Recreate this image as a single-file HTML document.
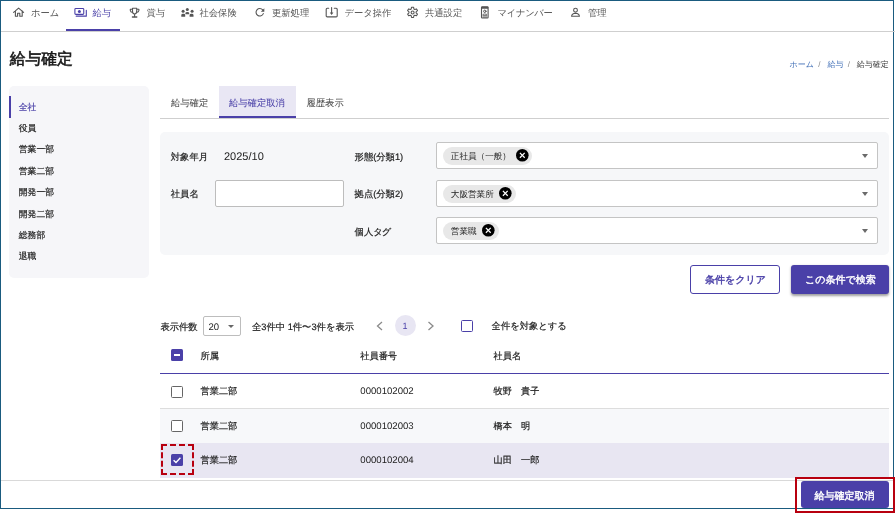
<!DOCTYPE html>
<html lang="ja"><head><meta charset="utf-8">
<style>
*{box-sizing:border-box;margin:0;padding:0}
html,body{width:895px;height:515px;overflow:hidden;background:#fff}
body{font-family:"Liberation Sans",sans-serif;color:#333;text-rendering:geometricPrecision;position:relative}
.a{position:absolute}
.t{position:absolute;white-space:nowrap;line-height:1;-webkit-text-stroke-width:0.2px}
.frame{position:absolute;left:0;top:0;width:894px;height:509px;border:1px solid #1a5b7f}
.nav{font-size:9.3px;color:#555}
.nav .t{-webkit-text-stroke-width:0}
.nav svg{position:absolute;overflow:visible}
.side{font-size:8.8px;color:#222}
.tab{font-size:9.3px;color:#4a4a4a}
.tab .t{-webkit-text-stroke-width:0.05px}
.lbl{font-size:9.3px;color:#222}
.sel{position:absolute;left:436px;width:442px;height:27px;background:#fff;border:1px solid #c4c4c4;border-radius:2px}
.chip{position:absolute;left:6.2px;top:4.2px;height:17.7px;border-radius:9px;background:#e8e8e8}
.chip span{position:absolute;left:7.6px;top:4.6px;font-size:8.6px;line-height:1;white-space:nowrap;color:#222}
.chip svg{position:absolute;top:1.6px;overflow:visible;shape-rendering:geometricPrecision}
.arr{position:absolute;left:424.8px;top:11.1px;width:0;height:0;border-left:3.6px solid transparent;border-right:3.6px solid transparent;border-top:4px solid #6a6a6a}
.cb{position:absolute;width:12px;height:12px;border:1.5px solid #666;border-radius:1.5px;background:#fff}
.row{position:absolute;left:160px;width:729px;height:35px;border-bottom:1px solid #ddd}
.cell{font-size:9.2px;color:#222}
.bc{font-size:8px;color:#333}
.bc .t{-webkit-text-stroke-width:0}
</style></head><body>
<div id="pg" style="position:absolute;left:0;top:0;width:895px;height:515px;will-change:transform">
<div class="frame"></div>

<!-- top nav -->
<div class="a" style="left:1px;top:31px;width:894px;height:1px;background:#cfcfcf"></div>
<div class="a" style="left:66px;top:29.2px;width:54px;height:2px;background:#4a40a8"></div>

<svg class="a" style="left:0;top:0;overflow:visible" width="895" height="32" viewBox="0 0 895 32">
 <g fill="none" stroke="#555" stroke-width="1.1" stroke-linejoin="round" stroke-linecap="round">
  <path d="M13.6 12.4 L18.6 8.1 L23.6 12.4 M15.4 10.9 V16.2 H17.6 V13.2 H19.8 V16.2 H22.2 V10.9"/>
  <path d="M132.5 8.3 H136.7 V11.2 Q136.7 13.8 134.6 14 Q132.5 13.8 132.5 11.2 Z M132.5 9.3 H130.3 V10.5 Q130.5 12.3 132.6 12.5 M136.7 9.3 H138.9 V10.5 Q138.7 12.3 136.6 12.5 M134.6 14 V16.6"/>
  <path d="M132.4 17 H136.8" stroke-width="1.3"/>
  <path d="M262.7 9.9 A3.75 3.75 0 1 0 263.3 13.6"/>
  <path d="M328.7 8.2 H327.2 Q326.2 8.2 326.2 9.2 V16 Q326.2 16.9 327.2 16.9 H336.2 Q337.2 16.9 337.2 16 V9.2 Q337.2 8.2 336.2 8.2 H334.3 M331.6 7.5 V13.2"/>
  <path d="M413.90 9.01 L413.55 7.20 L411.55 7.20 L411.20 9.01 L410.33 9.51 L408.59 8.91 L407.59 10.64 L408.99 11.85 L408.99 12.85 L407.59 14.06 L408.59 15.79 L410.33 15.19 L411.20 15.69 L411.55 17.50 L413.55 17.50 L413.90 15.69 L414.77 15.19 L416.51 15.79 L417.51 14.06 L416.11 12.85 L416.11 11.85 L417.51 10.64 L416.51 8.91 L414.77 9.51 Z"/>
  <circle cx="412.6" cy="12.5" r="1.5"/>
  <rect x="481.5" y="6.8" width="6.6" height="11.2" rx="0.7"/>
  <circle cx="484.8" cy="11.3" r="1.2" stroke-width="1"/>
  <path d="M483 14.3 Q484.8 13.6 486.6 14.3 M482.9 15.7 H486.7 M482.9 17.1 H486.7" stroke-width="0.9"/>
  <circle cx="575.5" cy="10.2" r="1.9"/>
  <path d="M571.6 16.2 Q571.8 13.3 575.5 13.2 Q579.2 13.3 579.4 16.2 Z"/>
 </g>
 <g fill="#555">
  <path d="M264.3 8.3 V11.8 H260.8 Z"/>
  <path d="M329.8 12.6 L331.6 15 L333.4 12.6 Z"/>
  <rect x="481.5" y="6.8" width="6.6" height="2" rx="0.5"/>
  <circle cx="187.3" cy="9.6" r="1.5"/><circle cx="183.1" cy="11.3" r="1.5"/><circle cx="192.1" cy="11.3" r="1.5"/>
  <path d="M185.4 14.3 V13.1 Q185.5 11.9 187.3 11.9 Q189.1 11.9 189.2 13.1 V14.3 Z"/>
  <path d="M181.3 16.8 V14.9 Q181.4 13.7 183 13.7 H183.6 Q185.1 13.8 185.2 14.9 V16.8 Z M189.6 16.8 V14.9 Q189.7 13.8 191.2 13.7 H191.8 Q193.4 13.7 193.5 14.9 V16.8 Z"/>
 </g>
 <g fill="none" stroke="#4a40a8" stroke-linecap="round" stroke-linejoin="round">
  <rect x="74.9" y="8.45" width="8.85" height="5.9" rx="0.9" stroke-width="1.1"/>
  <path d="M76.2 16.15 H86.3 V10.3" stroke-width="1.1"/>
 </g>
 <circle cx="79.4" cy="11.4" r="1.5" fill="#4a40a8"/>
</svg>
<div class="nav">
 <div class="t" style="left:31px;top:9.3px">ホーム</div>
 <div class="t" style="left:92.5px;top:9.3px;color:#4a40a8">給与</div>
 <div class="t" style="left:146.5px;top:9.3px">賞与</div>
 <div class="t" style="left:199.5px;top:9.3px">社会保険</div>
 <div class="t" style="left:272px;top:9.3px">更新処理</div>
 <div class="t" style="left:344.5px;top:9.3px">データ操作</div>
 <div class="t" style="left:425px;top:9.3px">共通設定</div>
 <div class="t" style="left:497.5px;top:9.3px;letter-spacing:-0.3px">マイナンバー</div>
 <div class="t" style="left:588px;top:9.3px">管理</div>
</div>

<!-- heading + breadcrumb -->
<div class="t" style="left:9.7px;top:52px;font-size:15.8px;font-weight:400;color:#1a1a1a;-webkit-text-stroke-width:0.6px">給与確定</div>
<div class="bc"><div class="t" style="left:789.6px;top:60.6px;color:#3d6cb5">ホーム</div><div class="t" style="left:818.2px;top:60.6px;color:#888">/</div><div class="t" style="left:827.4px;top:60.6px;color:#3d6cb5">給与</div><div class="t" style="left:847.8px;top:60.6px;color:#888">/</div><div class="t" style="left:856.8px;top:60.6px">給与確定</div></div>

<!-- sidebar -->
<div class="a" style="left:8.5px;top:86px;width:140px;height:192px;background:#f6f6f9;border-radius:5px"></div>
<div class="a" style="left:9px;top:95.8px;width:2px;height:22px;background:#4a40a8"></div>
<div class="side">
 <div class="t" style="left:18.8px;top:102.7px;color:#4a40a8">全社</div>
 <div class="t" style="left:18.8px;top:124.1px">役員</div>
 <div class="t" style="left:18.8px;top:145.4px">営業一部</div>
 <div class="t" style="left:18.8px;top:166.8px">営業二部</div>
 <div class="t" style="left:18.8px;top:188.1px">開発一部</div>
 <div class="t" style="left:18.8px;top:209.5px">開発二部</div>
 <div class="t" style="left:18.8px;top:230.8px">総務部</div>
 <div class="t" style="left:18.8px;top:252.2px">退職</div>
</div>

<!-- tabs -->
<div class="a" style="left:160px;top:118px;width:729px;height:1px;background:#cfcfcf"></div>
<div class="a" style="left:219px;top:86px;width:77px;height:32px;background:#e9e7f4;border-bottom:2px solid #4a40a8"></div>
<div class="tab">
 <div class="t" style="left:171px;top:98.8px">給与確定</div>
 <div class="t" style="left:229px;top:98.8px;color:#4a40a8">給与確定取消</div>
 <div class="t" style="left:306.5px;top:98.8px">履歴表示</div>
</div>

<!-- filter panel -->
<div class="a" style="left:160px;top:132px;width:729px;height:122.6px;background:#f6f7f9;border-radius:5px"></div>
<div class="lbl">
 <div class="t" style="left:170.8px;top:152.8px">対象年月</div>
 <div class="t" style="left:224px;top:151.8px;font-size:11px;color:#222;-webkit-text-stroke-width:0">2025/10</div>
 <div class="t" style="left:170.8px;top:190px">社員名</div>
 <div class="a" style="left:215px;top:180.3px;width:129px;height:26.5px;background:#fff;border:1px solid #bdbdbd;border-radius:2px"></div>
 <div class="t" style="left:354.6px;top:152.8px">形態(分類1)</div>
 <div class="t" style="left:354.6px;top:190.3px">拠点(分類2)</div>
 <div class="t" style="left:354.6px;top:227.6px">個人<span style="letter-spacing:-1px">タ</span>グ</div>
</div>
<div class="sel" style="top:142px"><div class="chip" style="width:89.3px"><span>正社員（一般）</span><svg class="x" style="left:72.7px" width="12.6" height="12.6" viewBox="0 0 12.6 12.6"><circle cx="6.3" cy="6.3" r="6.3" fill="#000"/><path d="M3.9 3.9 L8.7 8.7 M8.7 3.9 L3.9 8.7" stroke="#fff" stroke-width="1.25"/></svg></div><div class="arr"></div></div>
<div class="sel" style="top:180.3px"><div class="chip" style="width:72.6px"><span>大阪営業所</span><svg class="x" style="left:55.7px" width="12.6" height="12.6" viewBox="0 0 12.6 12.6"><circle cx="6.3" cy="6.3" r="6.3" fill="#000"/><path d="M3.9 3.9 L8.7 8.7 M8.7 3.9 L3.9 8.7" stroke="#fff" stroke-width="1.25"/></svg></div><div class="arr"></div></div>
<div class="sel" style="top:217.1px"><div class="chip" style="width:55.4px"><span>営業職</span><svg class="x" style="left:38.5px" width="12.6" height="12.6" viewBox="0 0 12.6 12.6"><circle cx="6.3" cy="6.3" r="6.3" fill="#000"/><path d="M3.9 3.9 L8.7 8.7 M8.7 3.9 L3.9 8.7" stroke="#fff" stroke-width="1.25"/></svg></div><div class="arr"></div></div>

<!-- buttons -->
<div class="a" style="left:690px;top:265px;width:90px;height:29px;border:1px solid #4a40a8;border-radius:3px;background:#fff"></div>
<div class="t" style="left:705px;top:275.7px;font-size:10px;font-weight:400;color:#4a40a8;-webkit-text-stroke-width:0.4px">条件をクリア</div>
<div class="a" style="left:791px;top:265px;width:98px;height:29px;border-radius:3px;background:#4a40a8;box-shadow:0 1.5px 2.5px rgba(0,0,0,.38)"></div>
<div class="t" style="left:805px;top:275.7px;font-size:10px;font-weight:400;color:#fff;-webkit-text-stroke-width:0.4px">この条件で検索</div>

<!-- pagination -->
<div class="t lbl" style="left:160.4px;top:322.5px">表示件数</div>
<div class="a" style="left:203.2px;top:316.3px;width:37.6px;height:19.3px;border:1px solid #bdbdbd;border-radius:2px;background:#fff"></div>
<div class="t" style="left:208.5px;top:323.3px;font-size:9.5px;color:#222;-webkit-text-stroke-width:0">20</div>
<div class="a" style="left:228.3px;top:325px;width:0;height:0;border-left:3.6px solid transparent;border-right:3.6px solid transparent;border-top:3.6px solid #666"></div>
<div class="t lbl" style="left:252px;top:322.5px">全3件中 1件〜3件を表示</div>
<svg class="a" style="left:376px;top:321px" width="8" height="10" viewBox="0 0 8 10"><path d="M6 1 L1.5 5 L6 9" fill="none" stroke="#8a8a8a" stroke-width="1.3"/></svg>
<div class="a" style="left:395px;top:315.2px;width:21px;height:21px;border-radius:50%;background:#e8e6f3"></div>
<div class="t" style="left:402.5px;top:321.5px;font-size:9px;color:#4a40a8;-webkit-text-stroke-width:0">1</div>
<svg class="a" style="left:427px;top:321px" width="8" height="10" viewBox="0 0 8 10"><path d="M1.5 1 L6 5 L1.5 9" fill="none" stroke="#8a8a8a" stroke-width="1.3"/></svg>
<div class="cb" style="left:461px;top:320.2px;border:1.8px solid #4a40a8"></div>
<div class="t lbl" style="left:491.6px;top:322px">全件を対象とする</div>

<!-- table -->
<div class="a" style="left:160px;top:373px;width:729px;height:1px;background:#4a40a8"></div>
<div class="a" style="left:171px;top:349px;width:12px;height:12px;background:#4a40a8;border-radius:1.5px"></div>
<div class="a" style="left:174px;top:354.3px;width:6px;height:1.6px;background:#fff"></div>
<div class="cell">
 <div class="t" style="left:200.5px;top:352px">所属</div>
 <div class="t" style="left:360.3px;top:352px">社員番号</div>
 <div class="t" style="left:493.5px;top:352px">社員名</div>
</div>
<div class="row" style="top:373.5px;background:#fff"></div>
<div class="row" style="top:408.5px;background:#f7f8fa"></div>
<div class="row" style="top:443px;background:#e8e6f2;border-bottom:none"></div>
<div class="cb" style="left:171px;top:385.5px"></div>
<div class="cb" style="left:171px;top:420.3px"></div>
<div class="a" style="left:171.2px;top:454px;width:11.8px;height:11.8px;background:#4a40a8;border-radius:1.5px"></div>
<svg class="a" style="left:171.2px;top:454px" width="12" height="12" viewBox="0 0 12 12"><path d="M2.6 6.2 L5 8.5 L9.4 3.8" fill="none" stroke="#fff" stroke-width="1.4"/></svg>
<div class="cell">
 <div class="t" style="left:200.5px;top:386.9px">営業二部</div>
 <div class="t" style="left:360.3px;top:386.7px;font-size:9.6px;-webkit-text-stroke-width:0">0000102002</div>
 <div class="t" style="left:493.5px;top:386.9px">牧野　貴子</div>
 <div class="t" style="left:200.5px;top:421.9px">営業二部</div>
 <div class="t" style="left:360.3px;top:421.7px;font-size:9.6px;-webkit-text-stroke-width:0">0000102003</div>
 <div class="t" style="left:493.5px;top:421.9px">橋本　明</div>
 <div class="t" style="left:200.5px;top:456px">営業二部</div>
 <div class="t" style="left:360.3px;top:455.7px;font-size:9.6px;-webkit-text-stroke-width:0">0000102004</div>
 <div class="t" style="left:493.5px;top:456px">山田　一郎</div>
</div>
<div class="a" style="left:161.1px;top:444.1px;width:33px;height:30.5px;border:2px dashed #b8000f"></div>

<!-- footer -->
<div class="a" style="left:1px;top:479.5px;width:892px;height:28.5px;background:#fff;border-top:1px solid #d9d9d9"></div>
<div class="a" style="left:801px;top:481px;width:88px;height:27px;border-radius:3px;background:#4a40a8"></div>
<div class="t" style="left:814.5px;top:491.7px;font-size:10px;font-weight:400;color:#fff;-webkit-text-stroke-width:0.4px">給与確定取消</div>
<div class="a" style="left:0;top:508px;width:894px;height:1px;background:#1a5b7f"></div>
<div class="a" style="left:795px;top:477px;width:100px;height:35.5px;border:2.5px solid #b8000f"></div>
</div>
</body></html>
